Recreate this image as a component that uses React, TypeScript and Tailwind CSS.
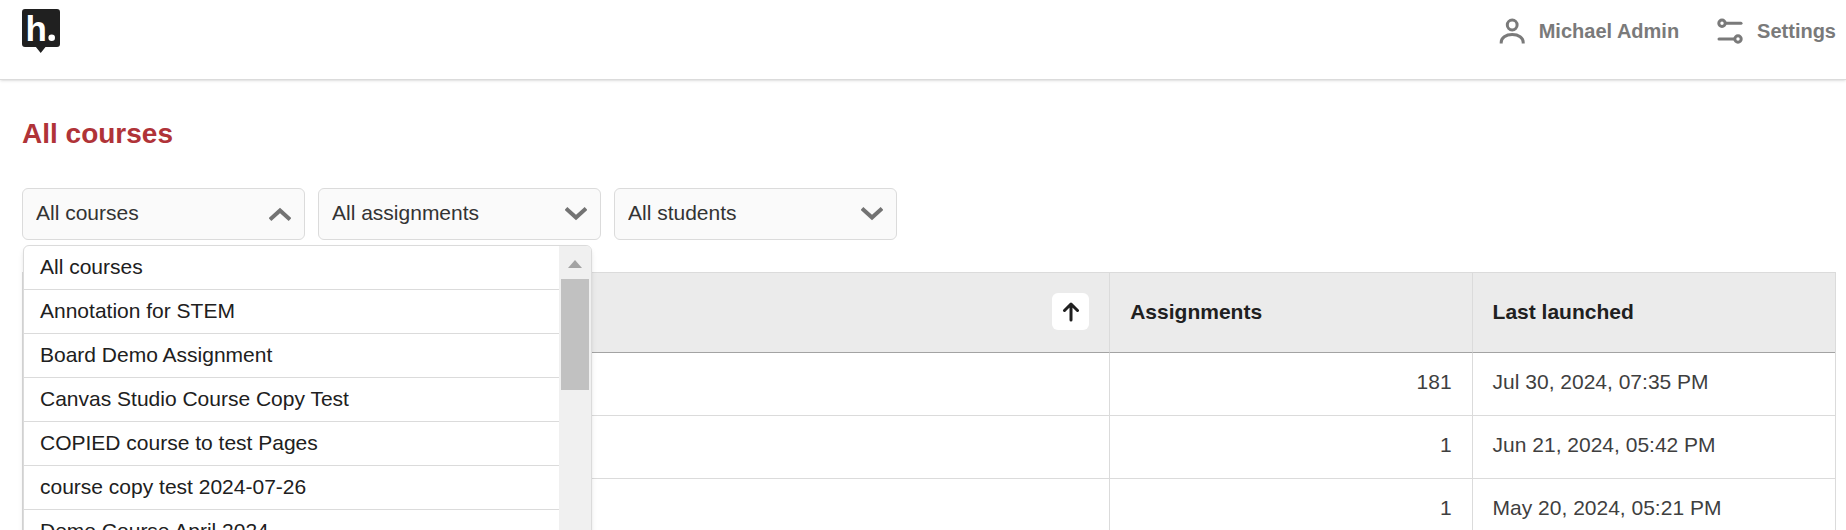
import type { ReactNode } from 'react'

const courses = [
  'All courses',
  'Annotation for STEM',
  'Board Demo Assignment',
  'Canvas Studio Course Copy Test',
  'COPIED course to test Pages',
  'course copy test 2024-07-26',
  'Demo Course April 2024',
]

const rows = [
  { assignments: 181, lastLaunched: 'Jul 30, 2024, 07:35 PM' },
  { assignments: 1, lastLaunched: 'Jun 21, 2024, 05:42 PM' },
  { assignments: 1, lastLaunched: 'May 20, 2024, 05:21 PM' },
]

function Logo() {
  return (
    <svg width="38" height="44" viewBox="0 0 38 44" aria-hidden="true">
      <path
        d="M3 0h32a3 3 0 0 1 3 3v32a3 3 0 0 1-3 3H23.500l-4.800 6-4.800-6H3a3 3 0 0 1-3-3V3a3 3 0 0 1 3-3z"
        fill="#202020"
      />
      <text x="3.500" y="32" fill="#fff" fontSize="35" fontWeight="700" fontFamily="Liberation Sans, Arial, sans-serif">
        h
      </text>
      <circle cx="29.700" cy="28.700" r="3.300" fill="#fff" />
    </svg>
  )
}

function UserIcon() {
  return (
    <svg width="26" height="26" viewBox="0 0 26 26" fill="none" stroke="#7a7a7a" strokeWidth="3" aria-hidden="true">
      <circle cx="13.200" cy="7" r="4.900" />
      <path d="M2.200 25.500v-1.200c0-4.500 4.500-7.800 11-7.800s11 3.300 11 7.800v1.200" />
    </svg>
  )
}

function SettingsIcon() {
  return (
    <svg
      width="26"
      height="26"
      viewBox="0 0 26 26"
      fill="none"
      stroke="#7a7a7a"
      strokeWidth="3"
      strokeLinecap="round"
      aria-hidden="true"
    >
      <circle cx="5" cy="5.200" r="3.200" />
      <path d="M8.500 5.200H24" />
      <circle cx="21" cy="21" r="3.200" />
      <path d="M2 21h15.500" />
    </svg>
  )
}

function Chevron({ up = false }: { up?: boolean }) {
  return (
    <svg
      className="pointer-events-none absolute right-3.5 top-1/2 -translate-y-1/2"
      width="22"
      height="14"
      viewBox="0 0 22 14"
      fill="none"
      stroke="#737373"
      strokeWidth="4"
      aria-hidden="true"
    >
      <path d={up ? 'M1 12.500 11 3.500l10 9' : 'M1 1.500l10 9 10-9'} />
    </svg>
  )
}

function Filter({ label, value, open = false, children }: { label: string; value: string; open?: boolean; children?: ReactNode }) {
  return (
    <div className="relative w-[283px]">
      <select
        aria-label={label}
        className="block h-[52px] w-full appearance-none rounded-md border border-[#dbdbdb] bg-[#fafafa] pb-0.5 pl-[13px] pr-12 text-[#333]"
      >
        <option>{value}</option>
      </select>
      <Chevron up={open} />
      {children}
    </div>
  )
}

function CourseList() {
  return (
    <div className="absolute left-px top-[57px] z-10 flex w-[569px] overflow-hidden rounded-md border border-[#dbdbdb] bg-white shadow-md">
      <ul role="listbox" aria-label="Courses" className="flex-1 text-[#202020]">
        {courses.map((course, i) => (
          <li
            key={course}
            role="option"
            aria-selected={i === 0}
            className="flex h-11 items-center border-b border-[#dbdbdb] px-4 pb-0.5"
          >
            {course}
          </li>
        ))}
      </ul>
      <div className="flex w-8 flex-col items-center bg-[#f0f0f0]" aria-hidden="true">
        <svg className="mb-[11px] mt-3.5" width="14" height="8" viewBox="0 0 14 8">
          <path d="M0 8 7 0l7 8z" fill="#a3a3a3" />
        </svg>
        <div className="h-[111px] w-7 bg-[#c1c1c1]" />
      </div>
    </div>
  )
}

export default function App() {
  return (
    <div className="h-screen overflow-hidden bg-white font-['Liberation_Sans',Arial,sans-serif] text-[21px] leading-7">
      <header className="flex h-20 items-start justify-between border-b border-[#dbdbdb] pl-[22px] pr-2.5 pt-[9px] shadow-sm">
        <a href="#home" aria-label="Home">
          <Logo />
        </a>
        <nav className="flex h-11 items-center gap-[38px] text-[20px] font-bold text-[#7a7a7a]">
          <a href="#account" className="flex items-center gap-3.5">
            <UserIcon />
            Michael Admin
          </a>
          <a href="#settings" className="flex items-center gap-3.5">
            <SettingsIcon />
            Settings
          </a>
        </nav>
      </header>

      <main className="pl-[22px] pr-2.5 pt-9">
        <h1 className="text-[28px] font-bold leading-9 text-[#b03338]">All courses</h1>

        <div className="mt-9 flex gap-[13px]">
          <Filter label="Courses" value="All courses" open>
            <CourseList />
          </Filter>
          <Filter label="Assignments" value="All assignments" />
          <Filter label="Students" value="All students" />
        </div>

        <table className="mt-8 w-full table-fixed border-separate border-spacing-0 border-x border-t border-[#dbdbdb]">
          <thead className="bg-[#ebebeb] text-left text-[#202020]">
            <tr className="h-20">
              <th className="w-3/5 border-b border-r border-b-[#a3a3a3] border-r-[#dbdbdb] px-5 pb-0.5">
                <div className="flex justify-end">
                  <button
                    type="button"
                    aria-label="Sort by course"
                    className="flex size-[37px] items-center justify-center rounded-md bg-white"
                  >
                    <svg
                      width="18"
                      height="20"
                      viewBox="0 0 18 20"
                      fill="none"
                      stroke="#202020"
                      strokeWidth="3"
                      strokeLinecap="round"
                      strokeLinejoin="round"
                      aria-hidden="true"
                    >
                      <path d="M9 18V2.500M2.500 8.500 9 2l6.500 6.500" />
                    </svg>
                  </button>
                </div>
              </th>
              <th className="w-1/5 border-b border-r border-b-[#a3a3a3] border-r-[#dbdbdb] px-5 pb-0.5">Assignments</th>
              <th className="w-1/5 border-b border-[#a3a3a3] px-5 pb-0.5">Last launched</th>
            </tr>
          </thead>
          <tbody className="text-[#3f3f3f]">
            {rows.map((row) => (
              <tr key={row.lastLaunched} className="h-[63px]">
                <td className="border-b border-r border-[#dbdbdb]" />
                <td className="border-b border-r border-[#dbdbdb] px-5 pb-1 text-right">{row.assignments}</td>
                <td className="border-b border-[#dbdbdb] px-5 pb-1">{row.lastLaunched}</td>
              </tr>
            ))}
          </tbody>
        </table>
      </main>
    </div>
  )
}
